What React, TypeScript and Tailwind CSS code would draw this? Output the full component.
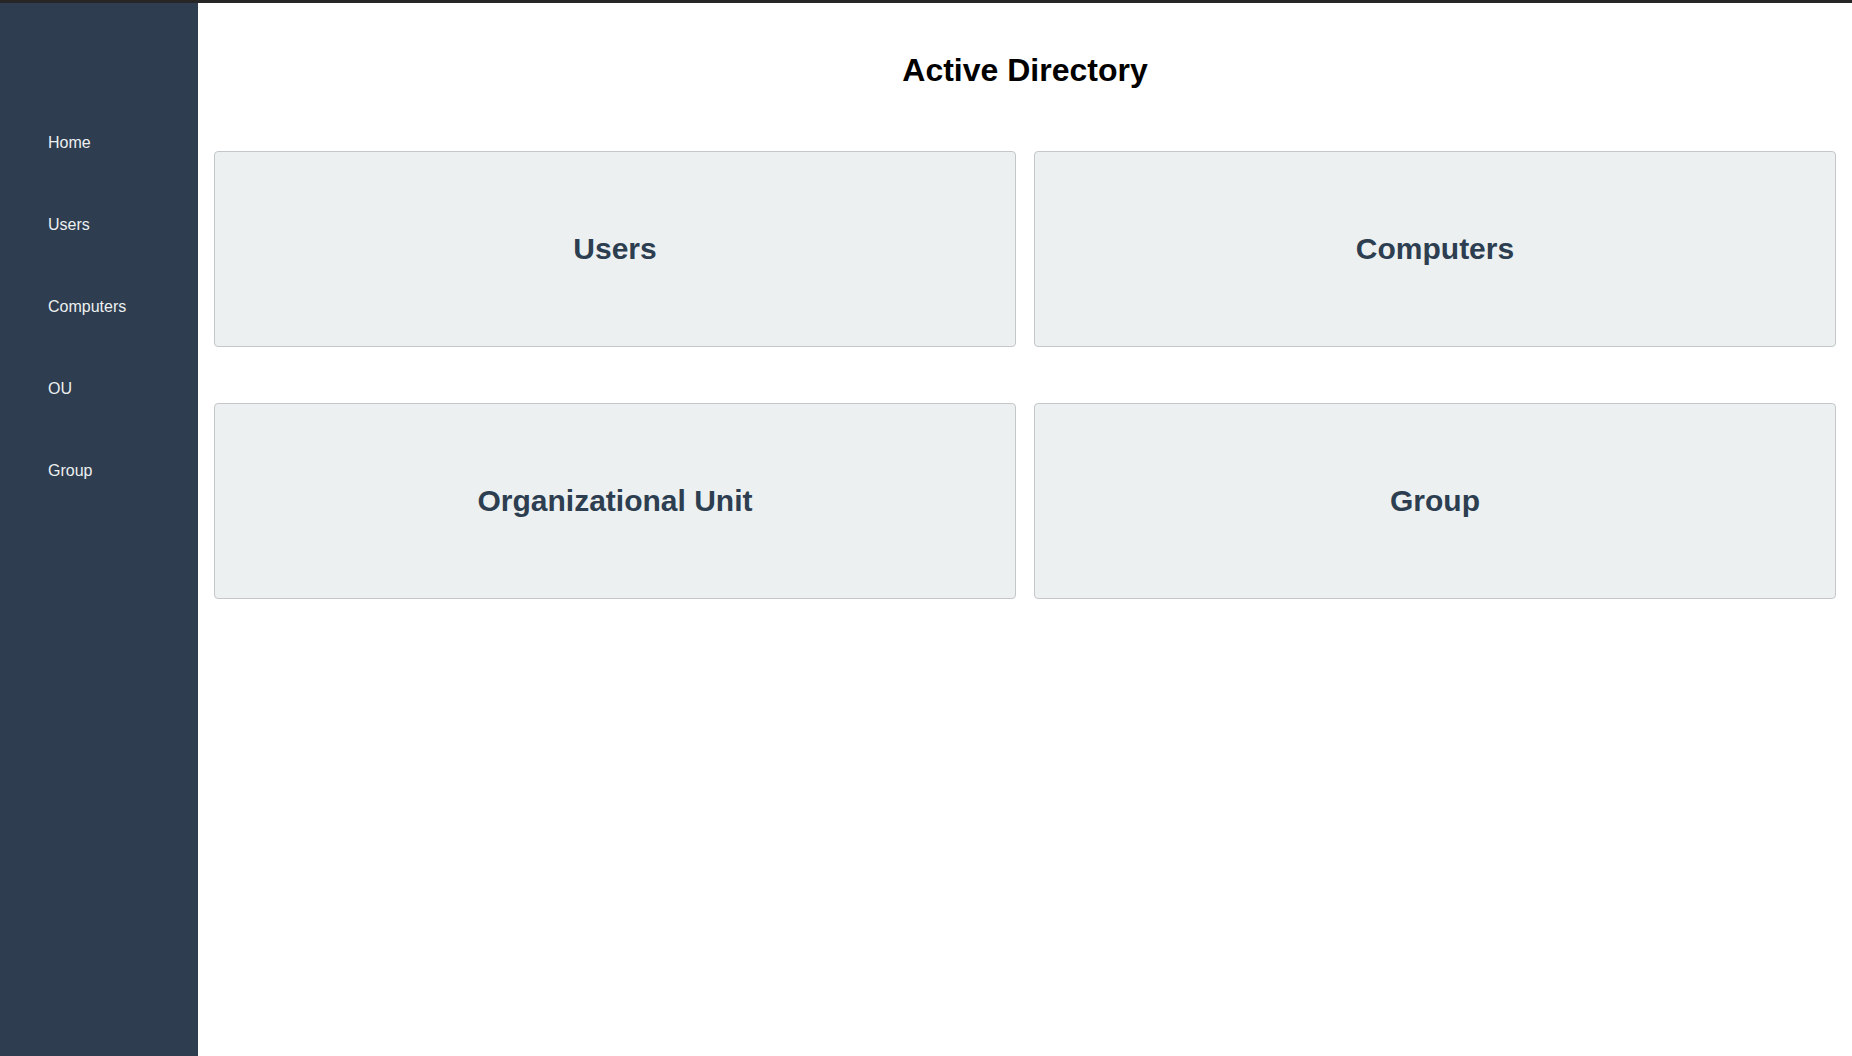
const navItems = ['Home', 'Users', 'Computers', 'OU', 'Group'];

const cards = ['Users', 'Computers', 'Organizational Unit', 'Group'];

function Sidebar() {
  return (
    <aside className="w-[198px] shrink-0 bg-[#2e3d4f] pt-[99px]">
      <nav className="flex flex-col">
        {navItems.map(item => (
          <a
            key={item}
            href="#"
            className="h-[82px] flex items-center pl-[48px] text-[16px] text-[#ecf0f1]"
          >
            {item}
          </a>
        ))}
      </nav>
    </aside>
  );
}

function Card({ title }: { title: string }) {
  return (
    <div className="h-[196px] flex items-center justify-center pb-[2px] rounded-[4px] border border-[#c3c7ca] bg-[#ecf0f1]">
      <h2 className="text-[30px] font-bold text-[#2c3e50]">{title}</h2>
    </div>
  );
}

export default function App() {
  return (
    <div
      className="h-screen flex flex-col bg-white"
      style={{ fontFamily: '"Liberation Sans", Arial, sans-serif' }}
    >
      <div className="h-[3px] shrink-0 bg-[#262626]" />
      <div className="flex flex-1 min-h-0">
        <Sidebar />
        <main className="flex-1 px-[16px] pt-[49px]">
          <h1 className="text-center text-[32px] leading-[36px] font-bold text-black">
            Active Directory
          </h1>
          <div className="mt-[63px] grid grid-cols-2 gap-x-[18px] gap-y-[56px]">
            {cards.map(c => (
              <Card key={c} title={c} />
            ))}
          </div>
        </main>
      </div>
    </div>
  );
}
